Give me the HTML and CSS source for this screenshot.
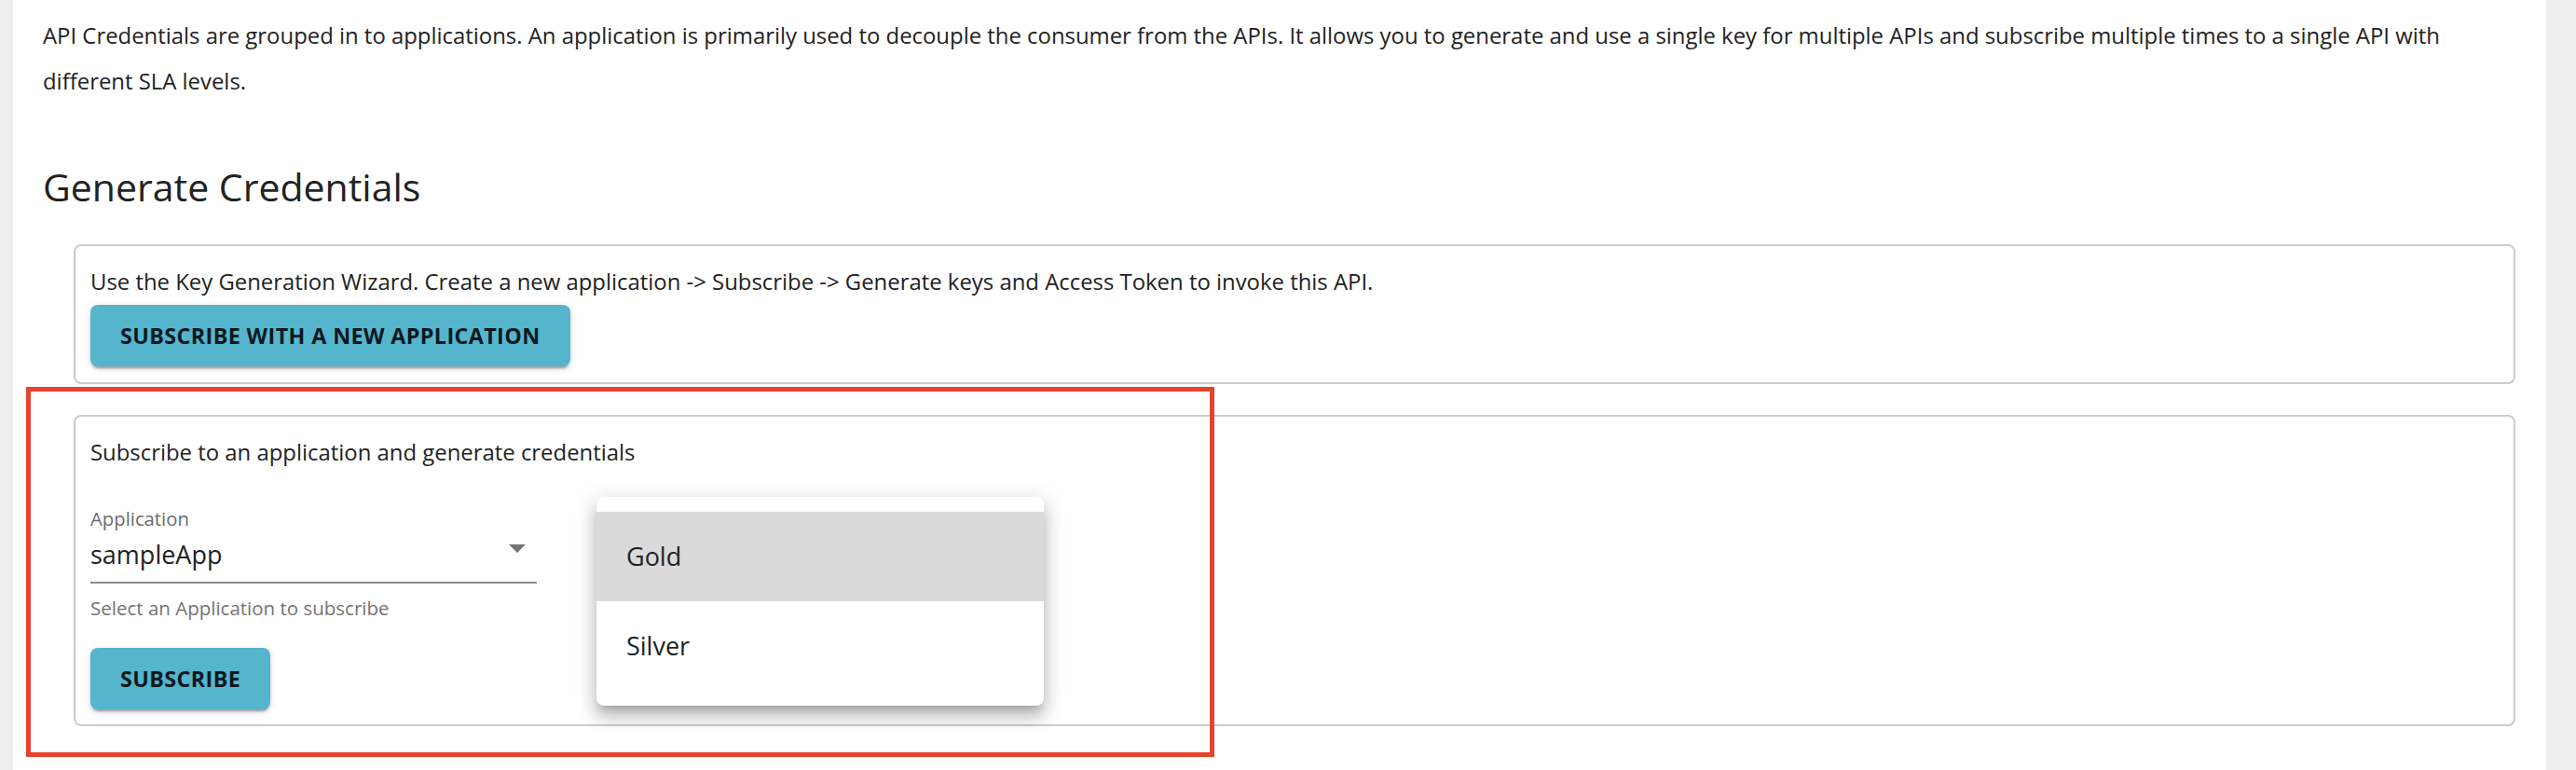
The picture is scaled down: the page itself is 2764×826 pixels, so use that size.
FILE: index.html
```html
<!DOCTYPE html>
<html lang="en">
<head>
<meta charset="utf-8">
<title>Generate Credentials</title>
<link rel="stylesheet" href="styles.css">
</head>
<body>
<main class="page">
  <p class="intro">API Credentials are grouped in to applications. An application is primarily used to decouple the consumer from the APIs. It allows you to generate and use a single key for multiple APIs and subscribe multiple times to a single API with different SLA levels.</p>
  <h2 class="title">Generate Credentials</h2>
  <section class="panel">
    <p class="panel-text">Use the Key Generation Wizard. Create a new application -&gt; Subscribe -&gt; Generate keys and Access Token to invoke this API.</p>
    <button class="btn" type="button">SUBSCRIBE WITH A NEW APPLICATION</button>
  </section>
  <section class="panel panel-sub">
    <p class="panel-text">Subscribe to an application and generate credentials</p>
    <div class="field">
      <label class="field-label">Application</label>
      <div class="select">
        <span class="select-value">sampleApp</span>
        <svg class="select-arrow" width="18" height="9" viewBox="0 0 18 9"><path d="M0 0h18L9 9z" fill="#757575"/></svg>
      </div>
      <div class="field-help">Select an Application to subscribe</div>
    </div>
    <button class="btn btn-sub" type="button">SUBSCRIBE</button>
    <ul class="menu">
      <li class="menu-item active">Gold</li>
      <li class="menu-item">Silver</li>
    </ul>
  </section>
  <div class="highlight"></div>
</main>
</body>
</html>
```

FILE: styles.css
```css
html, body {
  margin: 0;
  padding: 0;
}
body {
  background: #eeeeee;
  font-family: "Open Sans", "Noto Sans", sans-serif;
  color: #222222;
}
.page {
  position: relative;
  background: #ffffff;
  margin: 0 32px 0 14px;
  min-height: 826px;
  padding: 14px 33px 0 32px;
  box-sizing: border-box;
}
.intro {
  margin: 0;
  font-size: 23.9px;
  line-height: 48.5px;
}
.title {
  margin: 65px 0 37px 0;
  font-size: 41px;
  font-weight: 400;
  line-height: 49px;
  color: #222222;
}
.panel {
  margin-left: 33px;
  border: 2px solid #cccccc;
  border-radius: 8px;
  padding: 20px 16px 17px 16px;
}
.panel + .panel {
  margin-top: 33px;
}
.panel-sub {
  position: relative;
  padding-bottom: 16px;
}
.panel-text {
  margin: 0 0 7px 0;
  font-size: 23.9px;
  line-height: 36px;
}
.btn {
  display: inline-flex;
  align-items: center;
  height: 66px;
  padding: 0 32px;
  border: none;
  border-radius: 8px;
  background: #54b5cd;
  color: #0d1820;
  font-family: "Open Sans", "Noto Sans", sans-serif;
  font-weight: 700;
  font-size: 23.3px;
  letter-spacing: 0.4px;
  box-shadow: 0 5px 2px -3px rgba(0,0,0,0.2), 0 3px 3px 0 rgba(0,0,0,0.14), 0 2px 8px 0 rgba(0,0,0,0.12);
}
.field {
  width: 479px;
  margin-top: 41px;
}
.field-label {
  display: block;
  font-size: 20.3px;
  line-height: 24px;
  color: #6b6b6b;
}
.select {
  display: flex;
  align-items: center;
  justify-content: space-between;
  margin-top: 9px;
  padding: 0 12px 11px 0;
  border-bottom: 2px solid #8c8c8c;
}
.select-value {
  font-size: 27px;
  line-height: 36px;
  color: #222222;
}
.select-arrow {
  display: block;
  margin-top: -14px;
}
.field-help {
  margin-top: 14px;
  font-size: 20.5px;
  line-height: 24px;
  color: #737373;
}
.btn-sub {
  margin-top: 31px;
}
.menu {
  position: absolute;
  left: 559px;
  top: 86px;
  width: 480px;
  margin: 0;
  padding: 16px 0;
  list-style: none;
  background: #ffffff;
  border-radius: 8px;
  box-shadow: 0 8px 8px -5px rgba(0,0,0,0.2), 0 13px 16px 2px rgba(0,0,0,0.14), 0 5px 22px 4px rgba(0,0,0,0.12);
}
.menu-item {
  height: 96px;
  line-height: 96px;
  padding-left: 32px;
  font-size: 27px;
  color: #222222;
}
.menu-item.active {
  background: #dadada;
}
.highlight {
  position: absolute;
  left: 14px;
  top: 415px;
  width: 1275px;
  height: 397px;
  box-sizing: border-box;
  border: 5px solid #e5432b;
  pointer-events: none;
}
```
